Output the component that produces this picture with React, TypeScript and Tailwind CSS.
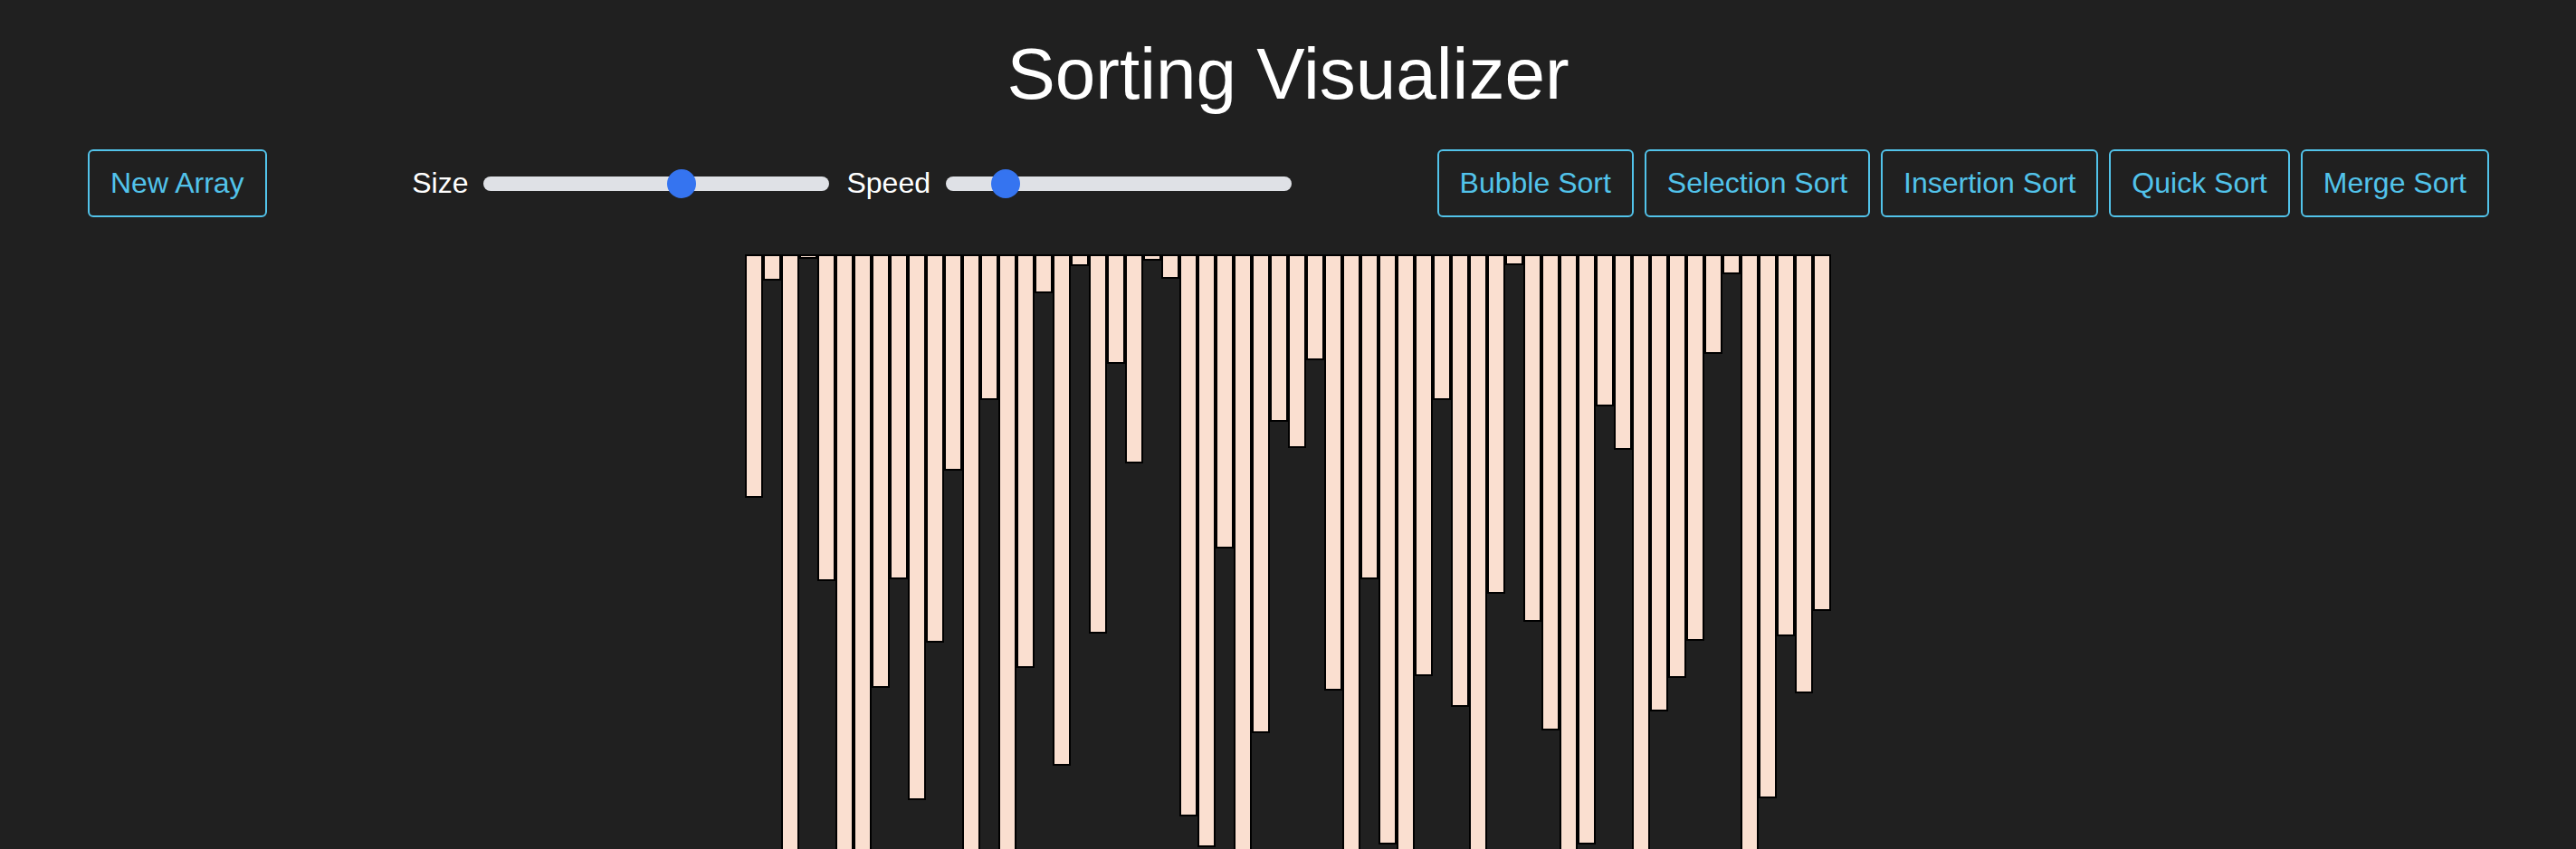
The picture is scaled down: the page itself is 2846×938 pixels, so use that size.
const barHeights = [
  269, 29, 700, 5, 361, 740, 720, 479, 359, 603, 429, 239, 760, 161, 700,
  457, 43, 565, 13, 419, 121, 231, 7, 27, 621, 655, 325, 730, 529, 185,
  214, 117, 482, 710, 359, 652, 745, 466, 161, 500, 690, 375, 12, 406, 526,
  735, 652, 168, 216, 700, 505, 468, 427, 110, 22, 725, 601, 422, 485, 394,
];

const sorts = ['Bubble Sort', 'Selection Sort', 'Insertion Sort', 'Quick Sort', 'Merge Sort'];

function OutlineButton({ label }: { label: string }) {
  return (
    <button className="h-[75px] px-[23px] border-2 border-[#52c3ea] rounded-[6px] text-[#52c3ea] text-[32px] leading-[37px] bg-transparent">
      {label}
    </button>
  );
}

function Slider({ label, thumbLeft }: { label: string; thumbLeft: string }) {
  return (
    <div className="flex items-center">
      <span className="text-white text-[32px] leading-[37px]">{label}</span>
      <div className="relative ml-[17px] w-[382px] h-[16px] rounded-full bg-[#dfe1e6]">
        <div className={`absolute top-[-8px] ${thumbLeft} w-[32px] h-[32px] rounded-full bg-[#3574f0]`} />
      </div>
    </div>
  );
}

export default function App() {
  return (
    <div className="h-screen overflow-hidden bg-[#202020] font-['Liberation_Sans',Arial,sans-serif]">
      <h1 className="pt-[36px] text-center text-white text-[80px] leading-[92px] font-normal">
        Sorting Visualizer
      </h1>

      <div className="mt-[37px] flex items-center justify-between pl-[97px] pr-[96px]">
        <OutlineButton label="New Array" />

        <div className="flex items-center gap-[19px]">
          <Slider label="Size" thumbLeft="left-[203px]" />
          <Slider label="Speed" thumbLeft="left-[50px]" />
        </div>

        <div className="flex items-center gap-[12px]">
          {sorts.map((s) => (
            <OutlineButton key={s} label={s} />
          ))}
        </div>
      </div>

      {/* bars hang from the top, heights come from the array */}
      <div className="mt-[41px] flex justify-center items-start">
        {barHeights.map((h, i) => (
          <div
            key={i}
            className="w-[20px] shrink-0 border-2 border-black bg-[#fadfd0]"
            style={{ height: h }}
          />
        ))}
      </div>
    </div>
  );
}
